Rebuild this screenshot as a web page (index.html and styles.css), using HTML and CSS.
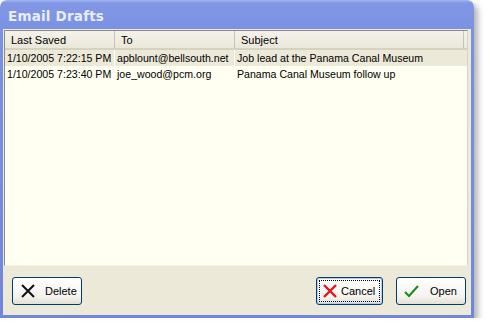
FILE: index.html
```html
<!DOCTYPE html>
<html lang="en">
  <head>
    <meta charset="UTF-8" />
    <title>Email Drafts</title>
    <link rel="stylesheet" href="styles.css">
  </head>
  <body>
    <div class="window">
      <div class="titlebar">Email Drafts</div>
      <div class="client">
        <div class="list">
          <div class="row head">
            <div class="cell c1">Last Saved</div>
            <div class="cell c2">To</div>
            <div class="cell c3">Subject</div>
          </div>
          <div class="row sel">
            <div class="cell c1">1/10/2005 7:22:15 PM</div>
            <div class="cell c2">apblount@bellsouth.net</div>
            <div class="cell c3">Job lead at the Panama Canal Museum</div>
          </div>
          <div class="row">
            <div class="cell c1">1/10/2005 7:23:40 PM</div>
            <div class="cell c2">joe_wood@pcm.org</div>
            <div class="cell c3">Panama Canal Museum follow up</div>
          </div>
        </div>
        <div class="buttons">
          <button class="btn">
            <svg width="16" height="16" viewBox="0 0 16 16"><path d="M2 2 L14 14 M14 2 L2 14" stroke="#111" stroke-width="2" fill="none"/></svg>
            Delete
          </button>
          <span class="spacer"></span>
          <button class="btn focus">
            <span class="dots">
              <svg width="16" height="16" viewBox="0 0 16 16"><path d="M2 2 L14 14 M14 2 L2 14" stroke="#e8141c" stroke-width="2.4" fill="none"/></svg>
              Cancel
            </span>
          </button>
          <button class="btn open">
            <svg width="17" height="16" viewBox="0 0 17 16"><path d="M2 9 L6 13 L15 3" stroke="#1a8a1a" stroke-width="2" fill="none"/></svg>
            Open
          </button>
        </div>
      </div>
    </div>
  </body>
</html>
```
FILE: styles.css
```css
body {
  margin: 0;
  background: #ffffff;
  font-family: "Liberation Sans", Arial, sans-serif;
  font-size: 11px;
  color: #000;
}
.window {
  width: 468px;
  height: 315px;
  padding: 0 3px 3px 3px;
  background: linear-gradient(#a2b5f0 0px, #8197e6 3px, #7b92e2 29px, #6f86dc 100%);
  border-radius: 7px 7px 0 0;
  box-shadow: 4px 4px 6px rgba(0, 0, 0, 0.3);
  display: flex;
  flex-direction: column;
}
.titlebar {
  height: 29px;
  line-height: 32px;
  padding-left: 5px;
  color: #e8eeff;
  font-family: "DejaVu Sans", sans-serif;
  font-weight: bold;
  font-size: 13.5px;
  letter-spacing: 0.2px;
}
.client {
  flex: 1;
  background: #ece9d8;
  display: flex;
  flex-direction: column;
}
.list {
  height: 234px;
  margin: 1px 3px 0 1px;
  border: 1px solid #8c8c84;
  border-right-color: #d8d4c6;
  border-bottom-color: #f4f2ea;
  background: #fffff2;
}
.row {
  display: flex;
  height: 16px;
  line-height: 16px;
  font-size: 10.6px;
}
.head {
  height: 17px;
  line-height: 18px;
  font-size: 11px;
  background: linear-gradient(#f3f2ea, #ebe8da);
  border-bottom: 2px solid #d6d2c0;
}
.sel {
  background: #ece9d8;
}
.cell {
  box-sizing: border-box;
  padding-left: 2px;
  white-space: nowrap;
  overflow: hidden;
  border-right: 1px solid #fffff8;
}
.head .cell {
  padding-left: 6px;
  border-right: 1px solid #c8c4b4;
}
.c1 { width: 110px; }
.c2 { width: 120px; }
.c3 { flex: 1; border-right: none; }
.head .c3 { border-right: 1px solid #c8c4b4; margin-right: 3px; }
.buttons {
  flex: 1;
  display: flex;
  align-items: center;
  gap: 13px;
  padding: 1px 5px 0 9px;
}
.spacer { flex: 1; }
.btn {
  box-sizing: border-box;
  flex: none;
  width: 70px;
  height: 28px;
  padding: 0 0 0 7px;
  display: flex;
  align-items: center;
  gap: 9px;
  font-family: "Liberation Sans", Arial, sans-serif;
  font-size: 11px;
  color: #000;
  background: linear-gradient(#ffffff, #f4f3ee 70%, #e3e0d4);
  border: 1px solid #003c74;
  border-radius: 3px;
}
.btn.open {
  gap: 10px;
  padding-left: 6px;
}
.btn.focus {
  width: 67px;
  padding: 2px;
  box-shadow: inset 0 0 0 1px #b6ccf6;
}
.dots {
  flex: 1;
  height: 100%;
  display: flex;
  align-items: center;
  gap: 3px;
  padding-left: 2px;
  border: 1px dotted #000;
  box-sizing: border-box;
}
```
